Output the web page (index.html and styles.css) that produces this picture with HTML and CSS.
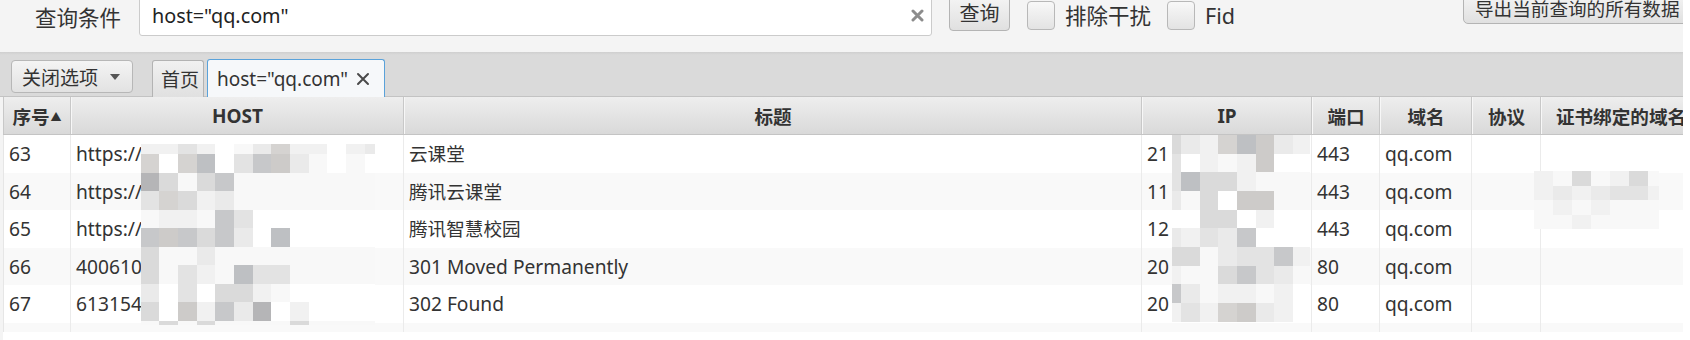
FILE: index.html
```html
<!DOCTYPE html>
<html lang="zh-CN">
<head>
<meta charset="utf-8">
<title>查询</title>
<link rel="stylesheet" href="styles.css">
</head>
<body>
<div class="app">
  <div class="toolbar">
    <span class="qlabel">查询条件</span>
    <div class="search">
      <span class="stext">host="qq.com"</span>
      <svg class="clear" width="13" height="13" viewBox="0 0 13 13"><path d="M2 2L11 11M11 2L2 11" stroke="#8c8c8c" stroke-width="3" stroke-linecap="round"/></svg>
    </div>
    <button class="btn qbtn">查询</button>
    <span class="check"></span><span class="clabel">排除干扰</span>
    <span class="check check2"></span><span class="clabel fid">Fid</span>
    <button class="btn export">导出当前查询的所有数据</button>
  </div>

  <div class="tabbar">
    <div class="dropdown"><span>关闭选项</span><span class="caret"></span></div>
    <div class="tab">首页</div>
    <div class="tab active"><span>host="qq.com"</span>
      <svg class="tabx" width="14" height="14" viewBox="0 0 14 14"><path d="M2 2L12 12M12 2L2 12" stroke="#4a4a4a" stroke-width="2" stroke-linecap="round"/></svg>
    </div>
  </div>

  <div class="tablewrap">
    <div class="thead">
      <div class="th">序号<span class="sort">▲</span></div>
      <div class="th lat">HOST</div>
      <div class="th">标题</div>
      <div class="th lat">IP</div>
      <div class="th">端口</div>
      <div class="th">域名</div>
      <div class="th">协议</div>
      <div class="th">证书绑定的域名</div>
    </div>
    <div class="tbody">
      <div class="row">
        <div class="td">63</div><div class="td">https://</div><div class="td zh">云课堂</div><div class="td">21</div><div class="td">443</div><div class="td">qq.com</div><div class="td"></div><div class="td"></div>
      </div>
      <div class="row alt">
        <div class="td">64</div><div class="td">https://</div><div class="td zh">腾讯云课堂</div><div class="td">11</div><div class="td">443</div><div class="td">qq.com</div><div class="td"></div><div class="td"></div>
      </div>
      <div class="row">
        <div class="td">65</div><div class="td">https://</div><div class="td zh">腾讯智慧校园</div><div class="td">12</div><div class="td">443</div><div class="td">qq.com</div><div class="td"></div><div class="td"></div>
      </div>
      <div class="row alt">
        <div class="td">66</div><div class="td">400610</div><div class="td">301 Moved Permanently</div><div class="td">20</div><div class="td">80</div><div class="td">qq.com</div><div class="td"></div><div class="td"></div>
      </div>
      <div class="row">
        <div class="td">67</div><div class="td">613154</div><div class="td">302 Found</div><div class="td">20</div><div class="td">80</div><div class="td">qq.com</div><div class="td"></div><div class="td"></div>
      </div>
      <div class="row alt part">
        <div class="td"></div><div class="td"></div><div class="td"></div><div class="td"></div><div class="td"></div><div class="td"></div><div class="td"></div><div class="td"></div>
      </div>

      <div class="mosaic m-host">
        <i class="b"></i><i class="b"></i><i class="d"></i><i class="b"></i><i class="w"></i><i class="a"></i><i class="c"></i><i class="f"></i><i class="b"></i><i class="b"></i><i class="w"></i><i class="b"></i><i class="c"></i>
        <i class="f"></i><i class="w"></i><i class="f"></i><i class="i"></i><i class="w"></i><i class="d"></i><i class="h"></i><i class="g"></i><i class="c"></i><i class="a"></i><i class="w"></i><i class="a"></i><i class="w"></i>
        <i class="j"></i><i class="e"></i><i class="a"></i><i class="e"></i><i class="h"></i><i class="a"></i><i class="a"></i><i class="a"></i><i class="a"></i><i class="a"></i><i class="a"></i><i class="a"></i><i class="a"></i>
        <i class="d"></i><i class="f"></i><i class="e"></i><i class="b"></i><i class="c"></i><i class="a"></i><i class="a"></i><i class="a"></i><i class="a"></i><i class="a"></i><i class="a"></i><i class="a"></i><i class="a"></i>
        <i class="a"></i><i class="b"></i><i class="b"></i><i class="a"></i><i class="h"></i><i class="d"></i><i class="w"></i><i class="w"></i><i class="w"></i><i class="w"></i><i class="w"></i><i class="w"></i><i class="w"></i>
        <i class="h"></i><i class="g"></i><i class="h"></i><i class="e"></i><i class="h"></i><i class="c"></i><i class="w"></i><i class="i"></i><i class="w"></i><i class="w"></i><i class="w"></i><i class="w"></i><i class="w"></i>
        <i class="e"></i><i class="a"></i><i class="a"></i><i class="c"></i><i class="a"></i><i class="a"></i><i class="a"></i><i class="a"></i><i class="a"></i><i class="a"></i><i class="a"></i><i class="a"></i><i class="a"></i>
        <i class="e"></i><i class="a"></i><i class="d"></i><i class="b"></i><i class="a"></i><i class="i"></i><i class="d"></i><i class="d"></i><i class="a"></i><i class="a"></i><i class="a"></i><i class="a"></i><i class="a"></i>
        <i class="c"></i><i class="w"></i><i class="d"></i><i class="w"></i><i class="e"></i><i class="e"></i><i class="b"></i><i class="a"></i><i class="w"></i><i class="w"></i><i class="w"></i><i class="w"></i><i class="w"></i>
        <i class="e"></i><i class="w"></i><i class="g"></i><i class="b"></i><i class="h"></i><i class="c"></i><i class="j"></i><i class="w"></i><i class="b"></i><i class="w"></i><i class="w"></i><i class="w"></i><i class="w"></i>
        <i class="a"></i><i class="e"></i><i class="a"></i><i class="e"></i><i class="a"></i><i class="a"></i><i class="a"></i><i class="a"></i><i class="e"></i><i class="a"></i><i class="a"></i><i class="a"></i><i class="a"></i>
      </div>

      <div class="mosaic m-ip">
        <i class="e"></i><i class="c"></i><i class="b"></i><i class="f"></i><i class="i"></i><i class="g"></i><i class="c"></i><i class="b"></i>
        <i class="d"></i><i class="w"></i><i class="b"></i><i class="a"></i><i class="b"></i><i class="g"></i><i class="w"></i><i class="w"></i>
        <i class="d"></i><i class="i"></i><i class="e"></i><i class="e"></i><i class="b"></i><i class="a"></i><i class="a"></i><i class="a"></i>
        <i class="c"></i><i class="a"></i><i class="e"></i><i class="w"></i><i class="g"></i><i class="g"></i><i class="a"></i><i class="a"></i>
        <i class="w"></i><i class="w"></i><i class="e"></i><i class="e"></i><i class="w"></i><i class="b"></i><i class="w"></i><i class="w"></i>
        <i class="c"></i><i class="b"></i><i class="d"></i><i class="c"></i><i class="h"></i><i class="w"></i><i class="w"></i><i class="w"></i>
        <i class="e"></i><i class="e"></i><i class="a"></i><i class="c"></i><i class="d"></i><i class="d"></i><i class="h"></i><i class="b"></i>
        <i class="b"></i><i class="a"></i><i class="a"></i><i class="e"></i><i class="h"></i><i class="d"></i><i class="c"></i><i class="a"></i>
        <i class="h"></i><i class="c"></i><i class="a"></i><i class="b"></i><i class="b"></i><i class="a"></i><i class="b"></i><i class="w"></i>
        <i class="b"></i><i class="d"></i><i class="b"></i><i class="f"></i><i class="g"></i><i class="c"></i><i class="b"></i><i class="w"></i>
      </div>

      <div class="mosaic m-cert">
        <i class="b"></i><i class="a"></i><i class="e"></i><i class="a"></i><i class="b"></i><i class="e"></i><i class="a"></i>
        <i class="b"></i><i class="c"></i><i class="b"></i><i class="c"></i><i class="d"></i><i class="d"></i><i class="b"></i>
        <i class="a"></i><i class="b"></i><i class="a"></i><i class="b"></i><i class="a"></i><i class="a"></i><i class="a"></i>
        <i class="a"></i><i class="a"></i><i class="b"></i><i class="a"></i><i class="a"></i><i class="a"></i><i class="a"></i>
      </div>
    </div>
  </div>
</div>
</body>
</html>
```

FILE: styles.css
```css
html, body {
  margin: 0;
  padding: 0;
  background: #ffffff;
}
body {
  width: 1690px;
  height: 340px;
  overflow: hidden;
}
.app {
  width: 1683px;
  height: 340px;
  overflow: hidden;
  background: #f4f4f4;
  font-family: "Noto Sans", "Noto Sans CJK SC", sans-serif;
  color: #333333;
}

/* ---------- toolbar ---------- */
.toolbar {
  display: flex;
  align-items: flex-start;
  height: 52px;
  box-sizing: border-box;
}
.toolbar > * {
  flex-shrink: 0;
  white-space: nowrap;
}
.qlabel {
  box-sizing: border-box;
  width: 139px;
  padding-left: 35px;
  font-size: 21.5px;
  line-height: 34px;
  color: #333;
  font-family: "Noto Sans CJK SC", sans-serif;
}
.search {
  box-sizing: border-box;
  width: 793px;
  height: 41px;
  margin-top: -5px;
  background: #ffffff;
  border: 1px solid #cbcbcb;
  border-radius: 0 0 3px 3px;
  display: flex;
  align-items: center;
  justify-content: space-between;
  padding: 0 7px 0 12px;
}
.stext {
  font-size: 19.8px;
  color: #222;
}
.clear {
  display: block;
}
.btn {
  font-family: "Noto Sans CJK SC", sans-serif;
  background: linear-gradient(#f7f7f7, #e0e0e0);
  border: 1px solid #b4b4b4;
  border-radius: 4px;
  color: #333;
  padding: 0;
  box-sizing: border-box;
}
.qbtn {
  width: 61px;
  height: 39px;
  margin-top: -8px;
  margin-left: 17px;
  font-size: 20px;
  line-height: 36px;
  padding-top: 2px;
}
.check {
  box-sizing: border-box;
  width: 28px;
  height: 29px;
  margin-top: 1px;
  margin-left: 17px;
  background: linear-gradient(#f8f8f8, #e3e3e3);
  border: 1px solid #b8b8b8;
  border-radius: 4px;
}
.check2 {
  margin-left: 16px;
}
.clabel {
  margin-left: 10px;
  font-size: 21.5px;
  line-height: 32px;
  color: #333;
  font-family: "Noto Sans", "Noto Sans CJK SC", sans-serif;
}
.fid {
  width: 40px;
}
.export {
  width: 260px;
  height: 34px;
  margin-top: -10px;
  margin-left: 218px;
  font-size: 18.6px;
  text-align: left;
  padding-left: 11px;
  line-height: 34px;
  border-radius: 5px;
}

/* ---------- tab bar ---------- */
.tabbar {
  box-sizing: border-box;
  height: 45px;
  display: flex;
  align-items: flex-end;
  background: linear-gradient(#cfcfcf 0, #dadada 3px, #dadada 100%);
  border-bottom: 1px solid #c3c3c3;
  font-family: "Noto Sans", "Noto Sans CJK SC", sans-serif;
}
.dropdown {
  box-sizing: border-box;
  width: 122px;
  height: 33px;
  margin-left: 11px;
  margin-bottom: 3px;
  border: 1px solid #b7b7b7;
  border-radius: 4px;
  background: linear-gradient(#f4f4f4, #e2e2e2);
  display: flex;
  align-items: center;
  padding-left: 10px;
  font-size: 19px;
  color: #333;
}
.caret {
  margin-left: 12px;
  width: 0;
  height: 0;
  border-left: 5px solid transparent;
  border-right: 5px solid transparent;
  border-top: 6px solid #555;
}
.tab {
  box-sizing: border-box;
  height: 37px;
  width: 52px;
  margin-left: 19px;
  margin-bottom: -1px;
  border: 1px solid #b3b3b3;
  border-bottom: none;
  border-radius: 3px 3px 0 0;
  background: linear-gradient(#f1f1f1, #e0e0e0);
  display: flex;
  align-items: center;
  padding-left: 8px;
  font-size: 19px;
  color: #333;
}
.tab.active {
  width: 178px;
  height: 38px;
  margin-left: 3px;
  border: 1px solid #5aa2da;
  border-bottom: none;
  background: #f6f8fa;
  padding-left: 9px;
  white-space: nowrap;
}
.tabx {
  margin-left: 8px;
  display: block;
}

/* ---------- table ---------- */
.tablewrap {
  background: #ffffff;
  height: 243px;
  box-sizing: border-box;
  border-left: 3px solid #f4f4f4;
}
.thead, .row {
  display: grid;
  grid-template-columns: 68px 333px 738px 170px 68px 92px 69px 160px;
}
.thead {
  height: 38px;
  background: linear-gradient(#eeeeee, #d9d9d9);
  border-bottom: 1px solid #c4c4c4;
  box-sizing: border-box;
}
.th {
  display: flex;
  align-items: center;
  justify-content: center;
  font-weight: bold;
  font-size: 18.6px;
  color: #333;
  border-left: 1px solid #f7f7f7;
  border-right: 1px solid #c8c8c8;
  white-space: nowrap;
  overflow: hidden;
}
.th.lat {
  font-size: 19px;
}
.th:first-child {
  border-left: 1px solid #c8c8c8;
}
.sort {
  font-size: 11px;
  margin-left: 1px;
  color: #333;
}
.tbody {
  position: relative;
}
.row {
  height: 37.5px;
  background: #ffffff;
}
.row.alt {
  background: #f9f9f9;
}
.row.part {
  height: 9px;
}
.td {
  box-sizing: border-box;
  padding-left: 5px;
  font-size: 19.2px;
  line-height: 37px;
  color: #333;
  border-right: 1px solid #ebebeb;
  white-space: nowrap;
  overflow: hidden;
}
.td.zh {
  font-size: 18.6px;
}
.td:first-child {
  border-left: 1px solid #e6e6e6;
}

/* ---------- redaction mosaics ---------- */
.mosaic {
  position: absolute;
  display: grid;
}
.mosaic i {
  display: block;
}
.m-host {
  left: 137.7px;
  top: 9px;
  grid-template-columns: repeat(12, 18.67px) 10.3px;
  grid-template-rows: 10px repeat(9, 18.55px) 4px;
}
.m-ip {
  left: 1168.7px;
  top: 0;
  grid-template-columns: 9.3px repeat(6, 18.67px) 16.7px;
  grid-template-rows: repeat(10, 18.67px);
}
.m-cert {
  left: 1530.6px;
  top: 36.4px;
  grid-template-columns: repeat(6, 19px) 11px;
  grid-template-rows: repeat(4, 14.5px);
}
.w { background: #ffffff; }
.a { background: #f8f8f8; }
.b { background: #f1f1f1; }
.c { background: #eaeaea; }
.d { background: #e3e3e3; }
.e { background: #dadada; }
.f { background: #d5d3d1; }
.g { background: #cdcbc9; }
.h { background: #c7c8ca; }
.i { background: #bec0c3; }
.j { background: #b5b5b7; }
```
